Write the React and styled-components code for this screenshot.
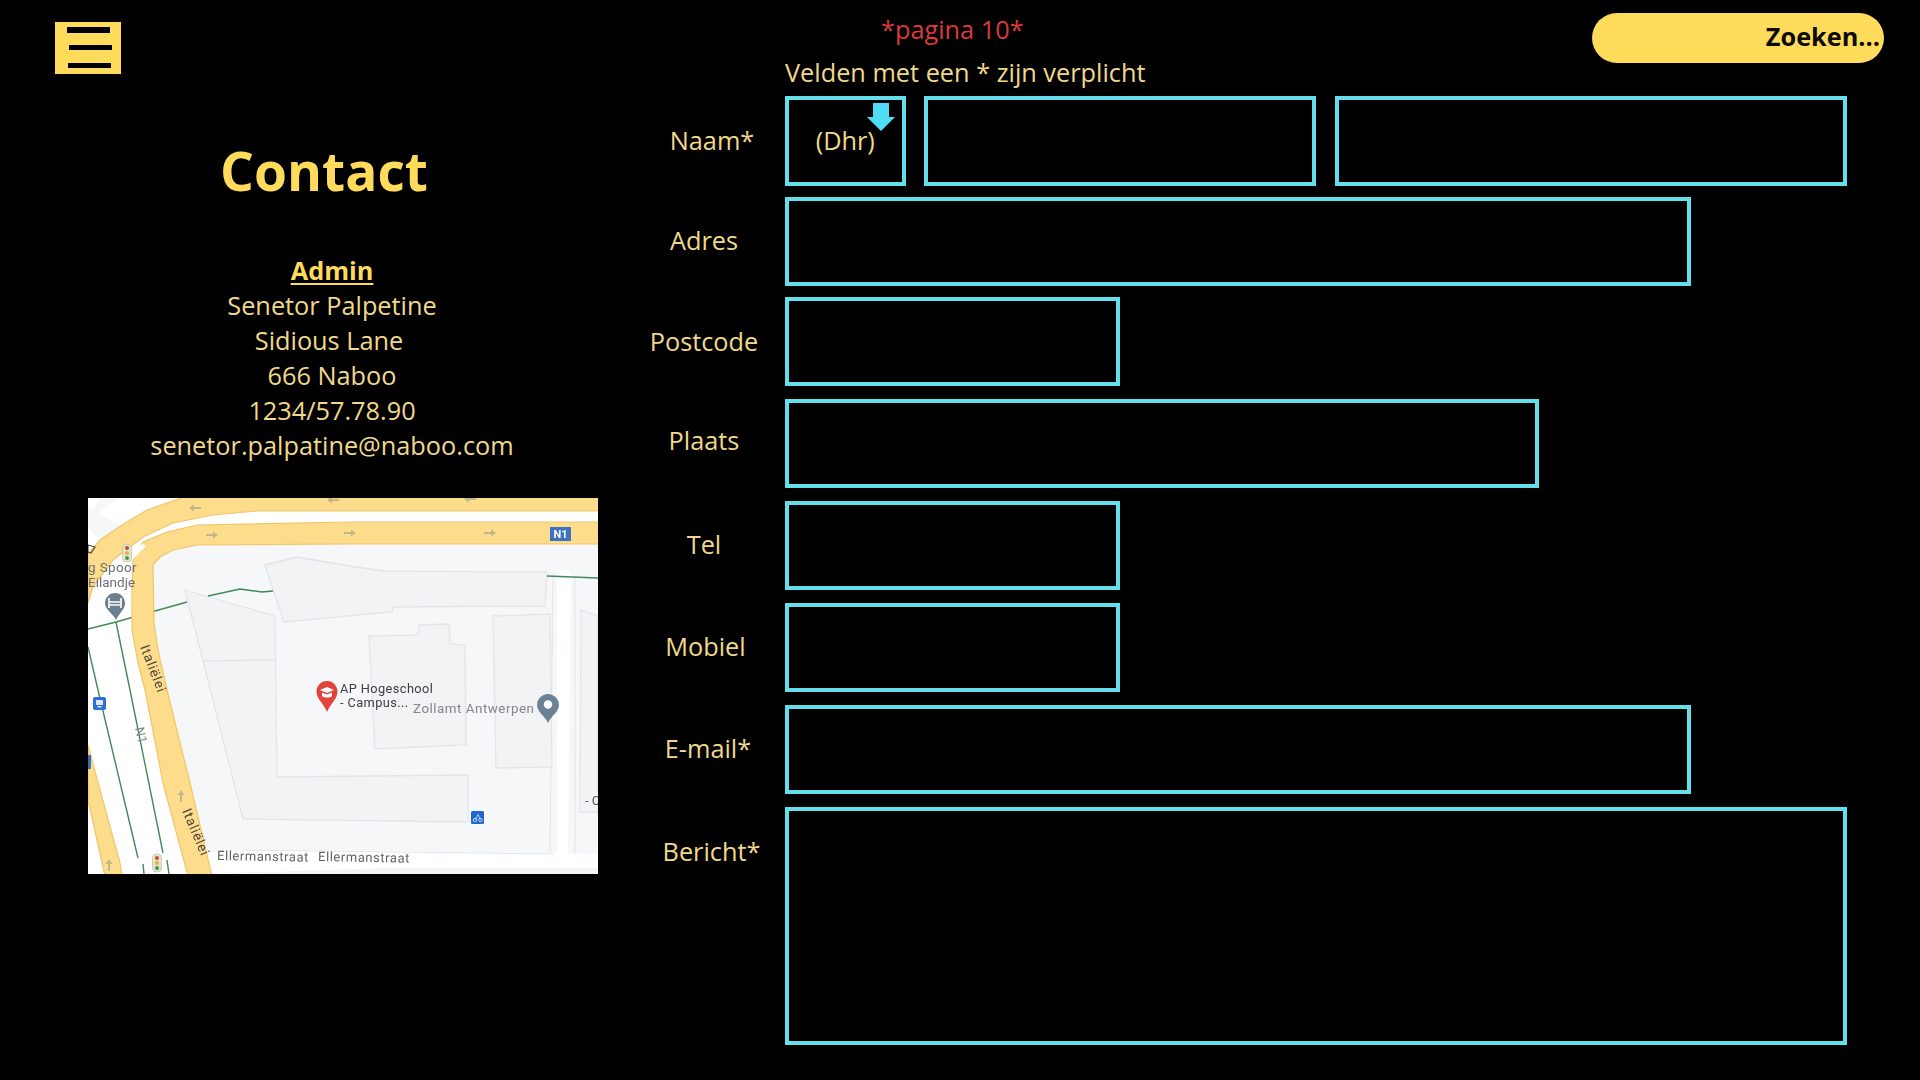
import React from "react";
import styled, { createGlobalStyle } from "styled-components";

const YELLOW = "#FFDB5C";
const TEXT = "#F0D98A";
const CYAN = "#62DFEA";

const Global = createGlobalStyle`
  html, body { margin: 0; padding: 0; background: #000; }
  body { font-family: "Open Sans", "Liberation Sans", sans-serif; overflow: hidden; }
`;

const Page = styled.div`
  width: 1920px;
  height: 1080px;
  background: #000;
  display: flex;
  color: ${TEXT};
`;

const Aside = styled.aside`
  width: 640px;
  flex: none;
  padding: 22px 0 0 55px;
  box-sizing: border-box;
`;

const MenuButton = styled.button`
  width: 66px;
  height: 52px;
  padding: 5px 0 6px;
  box-sizing: border-box;
  border: 0;
  background: ${YELLOW};
  display: flex;
  flex-direction: column;
  justify-content: space-between;
  align-items: center;
`;

const MenuBar = styled.span`
  display: block;
  width: 43px;
  height: 5.5px;
  background: #000;
  margin-left: ${(p) => p.$nudge * 2}px;
`;

const Title = styled.h1`
  margin: 0;
  padding: 61px 0 0;
  width: 538px;
  font-size: 53.3px;
  line-height: 71px;
  font-weight: 700;
  color: ${YELLOW};
  text-align: center;
`;

const Address = styled.address`
  margin: 0;
  padding-top: 47px;
  width: 554px;
  font-style: normal;
  font-size: 25.3px;
  line-height: 35px;
  text-align: center;
`;

const AdminName = styled.div`
  font-weight: 700;
  color: ${YELLOW};
  text-decoration: underline;
  text-underline-offset: 3px;
  text-decoration-thickness: 2px;
`;

const AddressLine = styled.div`
  padding-right: ${(p) => p.$inset || 0}px;
`;

const MapFrame = styled.svg`
  display: block;
  width: 510px;
  height: 376px;
  margin: 35px 0 0 33px;
  background: #f6f7f9;
  filter: blur(0.45px);
`;

const Main = styled.main`
  flex: 1;
  padding: 12px 36px 0 0;
  box-sizing: border-box;
  display: flex;
  flex-direction: column;
`;

const Head = styled.header`
  display: flex;
  justify-content: space-between;
  align-items: flex-start;
  padding-left: 145px;
  height: 84px;
`;

const Notes = styled.div`
  font-size: 25.3px;
  line-height: 35px;
`;

const PageMark = styled.div`
  color: #dc3a3e;
  padding-left: 96px;
  margin-bottom: 8px;
`;

const SearchPill = styled.div`
  width: 292px;
  height: 50px;
  margin-top: 1px;
  border-radius: 25px;
  background: ${YELLOW};
  color: #0d0a02;
  box-sizing: border-box;
  padding: 0 4px 4px 0;
  display: flex;
  align-items: center;
  justify-content: flex-end;
  font-size: 25.3px;
  font-weight: 700;
`;

const Form = styled.form`
  display: flex;
  flex-direction: column;
  padding-right: 37px;
`;

const Row = styled.div`
  display: flex;
  margin-top: ${(p) => p.$gap}px;
`;

const Label = styled.label`
  width: 128px;
  margin-right: 17px;
  flex: none;
  box-sizing: border-box;
  text-align: center;
  font-size: 25.3px;
  line-height: 35px;
  padding-top: ${(p) => p.$top}px;
  padding-left: ${(p) => p.$shift * 2}px;
  white-space: nowrap;
`;

const Fields = styled.div`
  display: flex;
  gap: 18.5px;
  flex: 1;
`;

const Input = styled.input`
  display: block;
  box-sizing: border-box;
  width: ${(p) => p.$w}px;
  height: ${(p) => p.$h}px;
  flex: ${(p) => (p.$grow ? 1 : "none")};
  background: #000;
  border: 4px solid ${CYAN};
  outline: 0;
  border-radius: 0;
  margin: 0;
  resize: none;
`;

const Salutation = styled.div`
  position: relative;
  box-sizing: border-box;
  width: 120.5px;
  height: 90px;
  flex: none;
  border: 4px solid ${CYAN};
  padding-bottom: 2px;
  display: flex;
  align-items: center;
  justify-content: center;
  font-size: 25.3px;
`;

const DropArrow = styled.svg`
  position: absolute;
  top: 3px;
  right: 7px;
  width: 28px;
  height: 28px;
`;

function Arrow({ x, y, r }) {
  return (
    <path
      transform={`translate(${x} ${y}) rotate(${r})`}
      d="M-6 -1H1V-3.5L6 0L1 3.5V1H-6Z"
      fill="#c2b68c"
    />
  );
}

function TrafficLight({ x, y }) {
  return (
    <g transform={`translate(${x} ${y})`}>
      <rect x="-4.5" y="-9" width="9" height="18" rx="4" fill="#e8e4c8" stroke="#b9c0a8" strokeWidth=".7" />
      <circle cy="-5" r="2" fill="#c9473f" />
      <circle cy="0" r="2" fill="#e2b13c" />
      <circle cy="5" r="2" fill="#3f9a5b" />
    </g>
  );
}

const mapFont = { fontFamily: "Roboto, 'Liberation Sans', sans-serif" };

function MapDrawing() {
  const bld = { fill: "#f2f3f5", stroke: "#e3e5e8", strokeWidth: 1.3 };
  const road = { fill: "#fddc8c", stroke: "#f0c56c", strokeWidth: 1.2 };
  const green = { fill: "none", stroke: "#3f8a58", strokeWidth: 1.4 };
  return (
    <MapFrame viewBox="0 0 510 376" xmlns="http://www.w3.org/2000/svg">
      {/* white road strips */}
      <path d="M0 0H510V24H262L109 27L79 34L55 44L44 70V132L57 192L100 376H0Z" fill="#fff" />
      <path d="M12 0L32 0L0 22Z" fill="#f6f7f9" />
      <path d="M0 10L34 27L12 42L0 30Z" fill="#f6f7f9" />
      <path d="M34 376L120 354L250 352L510 356V376Z" fill="#fff" />
      <path d="M120 376L300 370H510V376Z" fill="#f3f4f6" />
      <path d="M469 78Q469 72 476 72Q483 72 483 78L480 357H469Z" fill="#fff" />
      <path d="M465 76L462 355" stroke="#e3e5e8" fill="none" />
      <path d="M487 80V356" stroke="#e3e5e8" fill="none" />
      <path d="M155 352L465 356" stroke="#e3e5e8" fill="none" />
      {/* buildings */}
      <path {...bld} d="M177 67L209 59L262 68L295 73L459 74L457 108L305 109L304 114L196 124Z" />
      <path {...bld} d="M97 92L187 118L189 279L380 277L380 324L155 321Z" />
      <path {...bld} fill="none" d="M115 163L187 162" />
      <path {...bld} d="M281 138L330 137L331 127L361 126L362 146L377 147L378 247L330 249L287 251Z" />
      <path {...bld} d="M405 118L462 116L464 269L408 270Z" />
      <path {...bld} d="M493 112L510 118V314H492Z" />
      {/* green tracks */}
      <path {...green} d="M459 78L510 80" />
      <path {...green} d="M0 131L28 124L99 104M120 98L152 91L174 94L185 93" />
      <path {...green} d="M28 124L42 192L75 355M79 362L81 376" />
      <path {...green} d="M0 149L10 192L50 360" />
      <path {...green} d="M55 366L56 376" />
      {/* yellow carriageways */}
      <path {...road} d="M0 56L12 42L34 27L59 12L99 -2H512V13H169L125 17L85 25L55 39L25 62L5 89L0 105Z" />
      <path {...road} d="M512 24H262L109 27L79 34L55 44L45 62L44 92V132L50 165L57 192L75 285L100 378H124L102 285L79 192L70 152L66 125L65 67L72 59L85 52L109 47L262 46H512Z" />
      <path {...road} d="M0 247L12 292L32 365L34 378H17L15 369L0 302Z" />
      <path d="M36 64L54 46L58 48L40 66Z" fill="#fff" />
      <path d="M0 47L7 49L3 55L0 54Z" fill="none" stroke="#4a4a4a" strokeWidth="1.2" />
      {/* direction arrows */}
      <Arrow x={107} y={10} r={180} />
      <Arrow x={245} y={2} r={180} />
      <Arrow x={382} y={1} r={180} />
      <Arrow x={124} y={37} r={0} />
      <Arrow x={262} y={35} r={0} />
      <Arrow x={402} y={35} r={0} />
      <Arrow x={93} y={298} r={-90} />
      <Arrow x={21} y={367} r={-90} />
      {/* road badge */}
      <rect x="462" y="29" width="21" height="14" fill="#3b73c1" />
      <text x="472.5" y="40" textAnchor="middle" fontSize="11" fontWeight="700" fill="#fff" style={mapFont}>N1</text>
      {/* labels */}
      <text x="0" y="74" fontSize="13.5" letterSpacing=".35" fill="#6a6f75" style={mapFont}>g Spoor</text>
      <text x="0" y="89" fontSize="13.5" fill="#6a6f75" style={mapFont}>Eilandje</text>
      <text transform="translate(52 149) rotate(69)" fontSize="13.5" letterSpacing=".8" fill="#4b443a" style={mapFont}>Italiëlei</text>
      <text transform="translate(94 313) rotate(67)" fontSize="13.5" letterSpacing=".8" fill="#4b443a" style={mapFont}>Italiëlei</text>
      <text transform="translate(47 230) rotate(78)" fontSize="13" fill="#80868b" style={mapFont}>N1</text>
      <text transform="rotate(1 129 362)" x="129" y="362" fontSize="13" letterSpacing=".55" fill="#5f6368" style={mapFont}>Ellermanstraat</text>
      <text transform="rotate(1 230 363)" x="230" y="363" fontSize="13" letterSpacing=".55" fill="#5f6368" style={mapFont}>Ellermanstraat</text>
      <text x="252" y="195" fontSize="12.8" letterSpacing=".4" fill="#3c4043" style={mapFont}>AP Hogeschool</text>
      <text x="252" y="209" fontSize="12.8" letterSpacing=".4" fill="#3c4043" style={mapFont}>- Campus...</text>
      <text x="325" y="215" fontSize="13.4" letterSpacing=".5" fill="#80868b" style={mapFont}>Zollamt Antwerpen</text>
      <text x="497" y="307" fontSize="13" fill="#555" style={mapFont}>- C</text>
      {/* pins */}
      <path d="M239 183C233 183 228.500 188 228.500 193.500C228.500 201 236 206 239 214C242 206 249.500 201 249.500 193.500C249.500 188 245 183 239 183Z" fill="#e2443a" />
      <path d="M232 192L239 189L246 192L239 195Z" fill="#fff" />
      <path d="M234 194.500V198C236 200 242 200 244 198V194.500L239 196.500Z" fill="#fff" />
      <path d="M460 196C454 196 449 201 449 207C449 214 457 218 460 225C463 218 471 214 471 207C471 201 466 196 460 196Z" fill="#6b8294" />
      <circle cx="460" cy="206.500" r="4.200" fill="#fff" />
      <path d="M27 95C21 95 17 100 17 105C17 112 25 115 28 122C31 115 37 112 37 105C37 100 33 95 27 95Z" fill="#6d8090" />
      <path d="M21 100V110M33 100V110M21 104H33M21 107H33" stroke="#fff" strokeWidth="1.600" fill="none" />
      <TrafficLight x={39} y={55} />
      <TrafficLight x={69} y={365} />
      <rect x="5" y="199" width="13" height="13" rx="2" fill="#2c6fd6" />
      <path d="M8 202H15V207H8ZM9.500 208H13.500V209.500H9.500Z" fill="#dce8fa" />
      <rect x="-2" y="257" width="5" height="14" fill="#3a6fb5" />
      <rect x="383" y="313" width="13" height="13" rx="1.500" fill="#1f66d0" />
      <circle cx="387" cy="322" r="1.800" fill="none" stroke="#dce8fa" strokeWidth=".8" />
      <circle cx="392.500" cy="322" r="1.800" fill="none" stroke="#dce8fa" strokeWidth=".8" />
      <path d="M387 322L390 316.500L392.500 322" stroke="#dce8fa" strokeWidth=".8" fill="none" />
    </MapFrame>
  );
}

const rows = [
  { label: "Adres", gap: 11, top: 26, shift: 0, w: 906, h: 89 },
  { label: "Postcode", gap: 11, top: 26.5, shift: 0, w: 335, h: 89 },
  { label: "Plaats", gap: 13, top: 24, shift: 0, w: 754, h: 89 },
  { label: "Tel", gap: 13, top: 26, shift: 0, w: 335, h: 89 },
  { label: "Mobiel", gap: 13, top: 25.5, shift: 1.5, w: 335, h: 89 },
  { label: "E-mail*", gap: 13, top: 26, shift: 4, w: 906, h: 89 },
  { label: "Bericht*", gap: 13, top: 27, shift: 7.5, w: 1062, h: 238 },
];

export default function App() {
  return (
    <Page>
      <Global />
      <Aside>
        <MenuButton aria-label="Menu">
          <MenuBar $nudge={0} />
          <MenuBar $nudge={2.5} />
          <MenuBar $nudge={1.3} />
        </MenuButton>
        <Title>Contact</Title>
        <Address>
          <AdminName>Admin</AdminName>
          <AddressLine>Senetor Palpetine</AddressLine>
          <AddressLine $inset={6}>Sidious Lane</AddressLine>
          <AddressLine>666 Naboo</AddressLine>
          <AddressLine>1234/57.78.90</AddressLine>
          <AddressLine>senetor.palpatine@naboo.com</AddressLine>
        </Address>
        <MapDrawing />
      </Aside>
      <Main>
        <Head>
          <Notes>
            <PageMark>*pagina 10*</PageMark>
            <div>Velden met een * zijn verplicht</div>
          </Notes>
          <SearchPill>Zoeken...</SearchPill>
        </Head>
        <Form>
          <Row $gap={0}>
            <Label $top={27} $shift={8}>Naam*</Label>
            <Fields>
              <Salutation>
                (Dhr)
                <DropArrow viewBox="0 0 28 28">
                  <path d="M6 0H22V14H28L14 28L0 14H6Z" fill="#4fdcf5" />
                </DropArrow>
              </Salutation>
              <Input $w={392} $h={90} />
              <Input $w={512} $h={90} $grow />
            </Fields>
          </Row>
          {rows.map((r) => (
            <Row key={r.label} $gap={r.gap}>
              <Label $top={r.top} $shift={r.shift}>{r.label}</Label>
              <Fields>
                {r.h > 100 ? (
                  <Input as="textarea" $w={r.w} $h={r.h} />
                ) : (
                  <Input $w={r.w} $h={r.h} />
                )}
              </Fields>
            </Row>
          ))}
        </Form>
      </Main>
    </Page>
  );
}
